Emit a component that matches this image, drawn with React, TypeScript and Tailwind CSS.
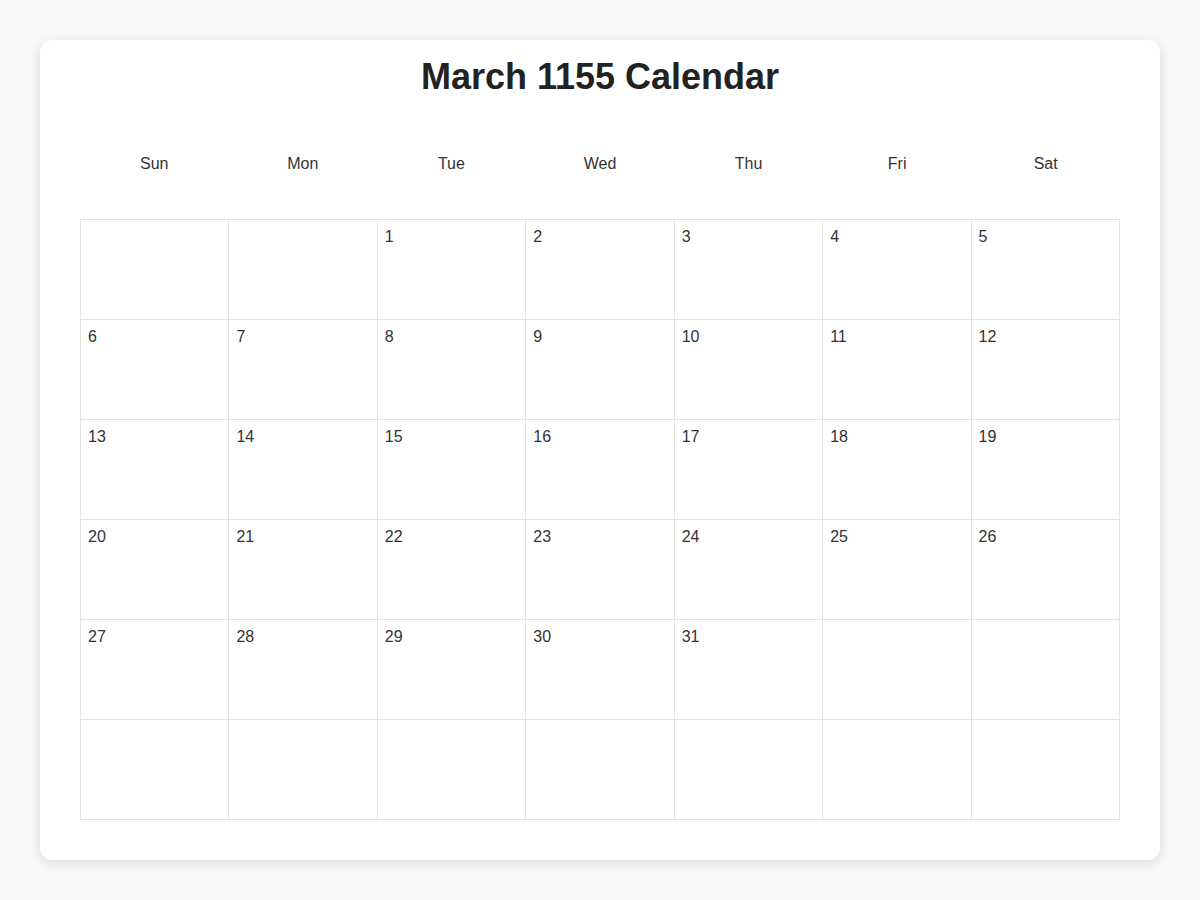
import React from "react";

const days = ["Sun", "Mon", "Tue", "Wed", "Thu", "Fri", "Sat"];

export default function App() {
  const cells: (number | null)[] = [];
  for (let i = 0; i < 2; i++) cells.push(null);
  for (let d = 1; d <= 31; d++) cells.push(d);
  while (cells.length < 42) cells.push(null);

  return (
    <div
      className="w-[1200px] h-[900px] bg-[#f7f8fa] pt-10"
      style={{ fontFamily: '"Liberation Sans", Arial, sans-serif' }}
    >
      <div className="mx-10 w-[1120px] h-[820px] bg-white rounded-[12px] shadow-[0_3px_12px_rgba(0,0,0,0.12)] px-10">
        <div className="h-[74px] flex items-center justify-center">
          <h1 className="text-[36px] font-bold text-[#222]">March 1155 Calendar</h1>
        </div>
        <div className="mt-[30px] grid grid-cols-7 h-[40px] items-center">
          {days.map((d) => (
            <div key={d} className="text-center text-[16px] text-[#333]">
              {d}
            </div>
          ))}
        </div>
        <div className="mt-[35px] grid grid-cols-7 border-l border-t border-[#e3e3e3]">
          {cells.map((c, i) => (
            <div
              key={i}
              className="h-[100px] border-r border-b border-[#e3e3e3] pl-[7px] pt-[5px] text-[16px] text-[#333]"
            >
              {c ?? ""}
            </div>
          ))}
        </div>
      </div>
    </div>
  );
}
